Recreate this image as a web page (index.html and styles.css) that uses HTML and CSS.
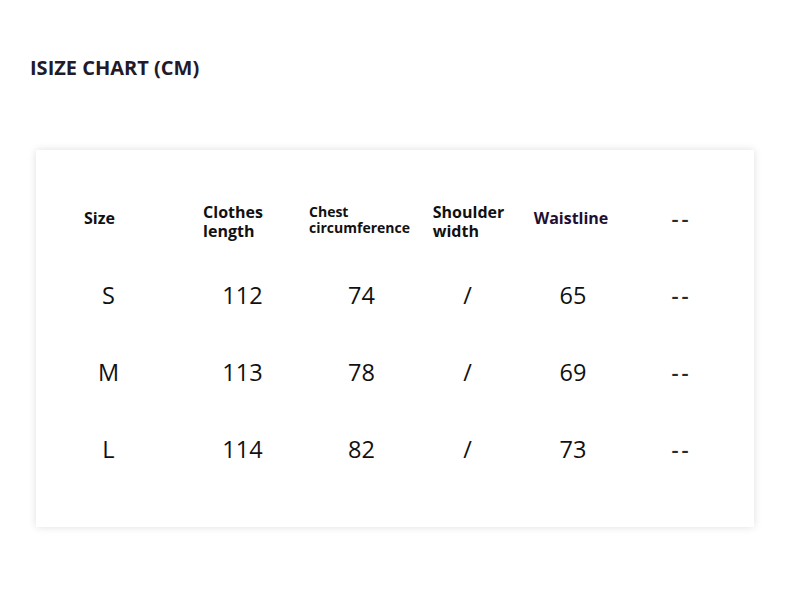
FILE: index.html
```html
<!DOCTYPE html>
<html>
<head>
<meta charset="utf-8">
<link rel="stylesheet" href="styles.css">
</head>
<body>
<div class="page">
  <h1 class="title">ISIZE CHART (CM)</h1>
  <div class="card">
    <div class="grid">
      <div class="cell head h-size">Size</div>
      <div class="cell head h-len"><div class="lines"><span class="ln">Clothes</span><span class="ln">length</span></div></div>
      <div class="cell head small h-chest"><div class="lines"><span class="ln">Chest</span><span class="ln">circumference</span></div></div>
      <div class="cell head h-sh"><div class="lines"><span class="ln">Shoulder</span><span class="ln">width</span></div></div>
      <div class="cell head waist">Waistline</div>
      <div class="cell head dash">--</div>

      <div class="cell val v-size">S</div>
      <div class="cell val v-len">112</div>
      <div class="cell val v-chest">74</div>
      <div class="cell val">/</div>
      <div class="cell val">65</div>
      <div class="cell val dash">--</div>

      <div class="cell val v-size">M</div>
      <div class="cell val v-len">113</div>
      <div class="cell val v-chest">78</div>
      <div class="cell val">/</div>
      <div class="cell val">69</div>
      <div class="cell val dash">--</div>

      <div class="cell val v-size">L</div>
      <div class="cell val v-len">114</div>
      <div class="cell val v-chest">82</div>
      <div class="cell val">/</div>
      <div class="cell val">73</div>
      <div class="cell val dash">--</div>
    </div>
  </div>
</div>
</body>
</html>
```

FILE: styles.css
```css
html, body {
  margin: 0;
  padding: 0;
  background: #ffffff;
}
body {
  width: 790px;
  height: 602px;
  overflow: hidden;
  font-family: "Open Sans", "Noto Sans", sans-serif;
  color: #111;
}
.page {
  padding: 54px 0 0 30px;
}
.title {
  margin: 0;
  font-family: "Open Sans", sans-serif;
  font-weight: 700;
  font-size: 20px;
  line-height: 28px;
  color: #221a2b;
}
.card {
  margin: 68px 0 0 6px;
  width: 718px;
  height: 377px;
  background: #fff;
  box-shadow: 0 0 8px rgba(0, 0, 0, 0.13);
  box-sizing: border-box;
  padding-top: 31px;
}
.grid {
  display: grid;
  grid-template-columns: 135px 129px 115px 105px 106px 108px;
  grid-template-rows: 75px 77px 77px 77px;
}
.cell {
  display: flex;
  align-items: center;
  justify-content: center;
}
.head {
  font-weight: 700;
  font-size: 16px;
  line-height: 19px;
  color: #111;
}
.lines {
  display: flex;
  flex-direction: column;
  text-align: left;
}
.ln {
  display: block;
  height: 19px;
  line-height: 19px;
}
.head.small {
  font-size: 14px;
}
.head.small .ln {
  height: 16px;
  line-height: 16px;
}
.h-size { padding-right: 8px; }
.h-len { padding-right: 5px; padding-top: 6px; }
.h-chest { padding-left: 4px; padding-top: 2px; }
.h-sh { padding-left: 2px; padding-top: 6px; }
.waist {
  color: #1e1032;
  padding-right: 4px;
}
.val {
  font-size: 23.5px;
  font-weight: 400;
  color: #111;
}
.v-size { padding-left: 10px; }
.v-len { padding-left: 14px; }
.v-chest { padding-left: 8px; }
.dash {
  color: #2a2a2a;
  font-weight: 600;
  font-size: 22px;
  letter-spacing: 3px;
  padding-left: 3px;
}
```
